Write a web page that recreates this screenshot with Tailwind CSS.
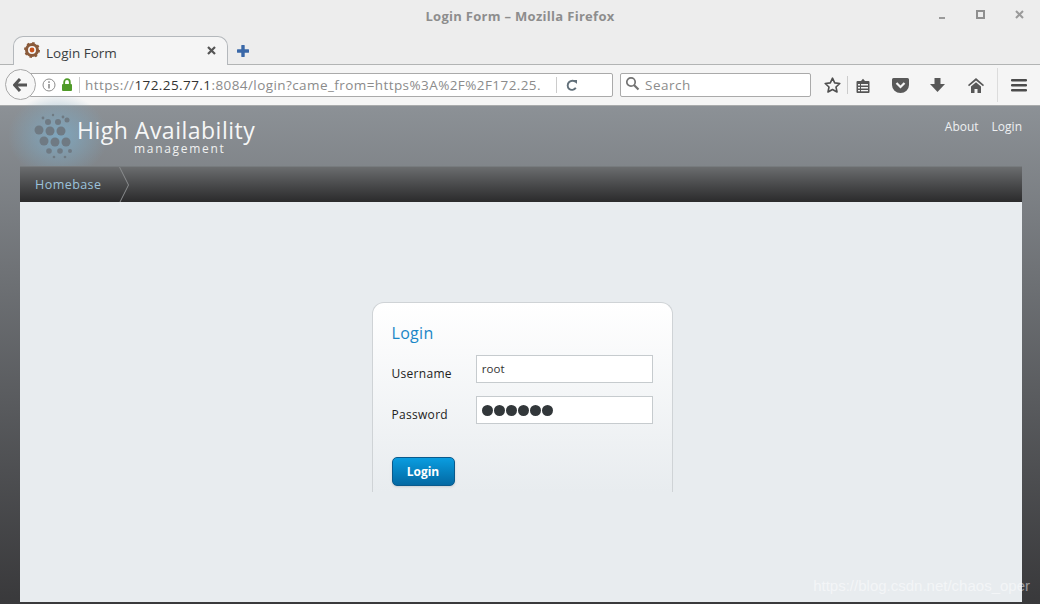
<!DOCTYPE html>
<html lang="en">
<head>
  <meta charset="UTF-8" />
  <title>Login Form - Mozilla Firefox</title>
  <script src="https://cdn.jsdelivr.net/npm/@tailwindcss/browser@4"></script>
</head>
<body class="w-[1040px] h-[604px] overflow-hidden bg-[#3b3b3d] font-['Open_Sans',sans-serif]">
  <!-- title bar + tab strip -->
  <div class="relative h-[65px] bg-[#ededed] border-b border-[#b2b4b4]">
    <div class="pt-[8px] text-center text-[13px] leading-[16px] font-bold text-[#8d8d8d] tracking-[0.3px]">Login Form – Mozilla Firefox</div>
    <div class="absolute right-0 top-[10px] flex items-center">
      <svg class="w-[8px] h-[8px] mr-[30px]" viewBox="0 0 8 8"><rect x="1" y="6" width="6" height="2" fill="#9a9a9a"/></svg>
      <svg class="w-[9px] h-[9px] mr-[30px]" viewBox="0 0 9 9"><rect x="1" y="1" width="7" height="7" fill="none" stroke="#8f8f8f" stroke-width="2"/></svg>
      <svg class="w-[9px] h-[9px] mr-[16px]" viewBox="0 0 9 9"><path d="M1 1l7 7M8 1l-7 7" stroke="#9a9a9a" stroke-width="2"/></svg>
    </div>
    <div class="absolute left-[13px] top-[36px] h-[29px] w-[215px] bg-[#f5f5f5] border border-b-0 border-[#b4b8bc] rounded-t-[10px] flex items-center pl-[10px] pr-[11px]">
      <svg class="w-[16px] h-[16px] mt-[-2px]" viewBox="0 0 16 16"><circle cx="8" cy="8" r="5.5" fill="none" stroke="#8a5a3a" stroke-width="3"/><circle cx="8" cy="8" r="7" fill="none" stroke="#8a5a3a" stroke-width="2" stroke-dasharray="2.4 3.1"/><circle cx="8" cy="8" r="2.4" fill="#c8521c"/></svg>
      <span class="ml-[6px] text-[13.5px] leading-[16px] text-[#3b3f42] mt-[3px]">Login Form</span>
      <svg class="ml-auto w-[9px] h-[9px] mt-[-1px]" viewBox="0 0 9 9"><path d="M1 1l7 7M8 1l-7 7" stroke="#555" stroke-width="2.2"/></svg>
    </div>
    <svg class="absolute left-[237px] top-[45px] w-[12px] h-[12px]" viewBox="0 0 12 12"><path d="M6 1v10M1 6h10" stroke="#3a68a8" stroke-width="3.4" stroke-linecap="round"/></svg>
  </div>
  <!-- nav toolbar -->
  <div class="relative h-[41px] bg-[#f5f5f5] border-b border-[#a9abac] flex items-center">
    <div class="absolute left-[5px] top-[4px] w-[31px] h-[31px] rounded-full bg-[#f7f7f7] border border-[#a8a8a8] flex items-center justify-center z-10">
      <svg class="w-[15px] h-[14px]" viewBox="0 0 15 14"><path d="M7 1L1.5 7 7 13M2 7h12" fill="none" stroke="#555" stroke-width="3"/></svg>
    </div>
    <div class="ml-[30px] w-[583px] h-[24px] bg-white border border-[#aaa] rounded-r-[2px] flex items-center mt-[-1px]">
      <svg class="ml-[11px] w-[14px] h-[14px]" viewBox="0 0 14 14"><circle cx="7" cy="7" r="6" fill="none" stroke="#8c8c8c"/><rect x="6.2" y="6" width="1.6" height="4.5" fill="#8c8c8c"/><rect x="6.2" y="3.3" width="1.6" height="1.6" fill="#8c8c8c"/></svg>
      <svg class="ml-[5px] w-[12px] h-[13px]" viewBox="0 0 12 13"><path d="M3.2 6V4a2.8 2.8 0 015.6 0v2" fill="none" stroke="#4f9a28" stroke-width="1.8"/><rect x="1" y="6" width="10" height="7" rx="1" fill="#4f9a28"/></svg>
      <div class="ml-[6px] w-px h-[16px] bg-[#ccc]"></div>
      <div class="ml-[5px] w-[469px] overflow-hidden whitespace-nowrap text-[13.5px] leading-[22px] tracking-[0.42px] text-[#8b8b8b]">https://<span class="text-[#333]">172.25.77.1</span>:8084/login?came_from=https%3A%2F%2F172.25.</div>
      <div class="ml-[2px] w-px h-[16px] bg-[#ccc]"></div>
      <svg class="ml-[9px] w-[12px] h-[12px]" viewBox="0 0 12 12"><path d="M10 3.2A4.6 4.6 0 103 9.8a4.6 4.6 0 006.8-1" fill="none" stroke="#62707a" stroke-width="1.9"/><path d="M7 1l4 0v4z" fill="#62707a"/></svg>
    </div>
    <div class="ml-[7px] w-[191px] h-[24px] bg-white border border-[#aaa] rounded-[2px] flex items-center mt-[-1px]">
      <svg class="ml-[4px] w-[15px] h-[15px] mt-[-2px]" viewBox="0 0 15 15"><circle cx="6" cy="6" r="4.2" fill="none" stroke="#737373" stroke-width="1.7"/><path d="M9 9l4.5 4.5" stroke="#737373" stroke-width="2.2"/></svg>
      <span class="ml-[5px] text-[13.5px] tracking-[0.5px] text-[#8c8c8c] leading-[22px]">Search</span>
    </div>
    <svg class="ml-[13px] w-[17px] h-[16px]" viewBox="0 0 17 16"><path d="M8.5 1.2l2.2 4.7 5.1.6-3.8 3.5 1 5-4.5-2.5L4 15l1-5L1.2 6.5l5.1-.6z" fill="none" stroke="#4f4f4f" stroke-width="1.6" stroke-linejoin="round"/></svg>
    <div class="ml-[6px] w-px h-[18px] bg-[#ccc]"></div>
    <svg class="ml-[8px] w-[14px] h-[15px]" viewBox="0 0 14 15"><path d="M1.5 3h3.5L7 .8 9 3h3.5a1 1 0 011 1v10a1 1 0 01-1 1h-11a1 1 0 01-1-1V4a1 1 0 011-1z" fill="#565656"/><path d="M2 6h2v1.5H2zM5 6h7v1.5H5zM2 9h2v1.5H2zM5 9h7v1.5H5zM2 12h2v1.2H2zM5 12h7v1.2H5z" fill="#f5f5f5"/></svg>
    <svg class="ml-[22px] w-[17px] h-[15px]" viewBox="0 0 17 15"><path d="M1.5 0h14A1.5 1.5 0 0117 1.5V7a8.5 8 0 01-17 0V1.5A1.5 1.5 0 011.5 0z" fill="#595959"/><path d="M4.5 5l4 4 4-4" fill="none" stroke="#f5f5f5" stroke-width="2.2"/></svg>
    <svg class="ml-[21px] w-[15px] h-[14px]" viewBox="0 0 15 14"><path d="M4.5 0h6v6H15l-7.5 8L0 6h4.500z" fill="#585858"/></svg>
    <svg class="ml-[23px] w-[16px] h-[15px]" viewBox="0 0 16 15"><path d="M8 0L0 7l1 1.200L8 2.400l7 5.800L16 7z" fill="#585858"/><path d="M3 8.500L8 4.300l5 4.200V15H9.500v-4h-3v4H3z" fill="#585858"/></svg>
    <div class="ml-[13px] w-px h-[34px] bg-[#dcdcdc]"></div>
    <svg class="ml-[13px] w-[16px] h-[13px]" viewBox="0 0 16 13"><path d="M1 0h14a1 1 0 010 2.500H1A1 1 0 011 0zM1 5h14a1 1 0 010 2.500H1A1 1 0 011 5zM1 10h14a1 1 0 010 2.500H1A1 1 0 011 10z" fill="#4c4c4c"/></svg>
  </div>
  <!-- page -->
  <div class="h-[498px] bg-gradient-to-b from-[#8c9196] to-[#39393b] relative px-[20px] pr-[18px]">
    <div class="h-[60px] flex justify-between">
      <div class="relative pl-[57px] pt-[11px]">
        <div class="absolute left-[-12px] top-[-12px] w-[100px] h-[84px] rounded-full bg-[radial-gradient(closest-side,#7fa6bd,transparent)]"></div>
        <svg class="absolute left-[13px] top-[7px] w-[44px] h-[48px]" viewBox="0 0 44 48">
          <g fill="#6f7a83"><circle cx="10" cy="5" r="1.400"/><circle cx="20" cy="2" r="1.200"/><circle cx="30" cy="4" r="1.400"/><circle cx="15" cy="9" r="3"/><circle cx="25" cy="9" r="3"/><circle cx="34" cy="7" r="2.500"/><circle cx="6" cy="17" r="4.500"/><circle cx="17" cy="18" r="4.500"/><circle cx="28" cy="18" r="4.500"/><circle cx="11" cy="28" r="4.500"/><circle cx="22" cy="29" r="4.500"/><circle cx="33" cy="29" r="4.500"/><circle cx="16" cy="38" r="2.800"/><circle cx="27" cy="38" r="2.800"/><circle cx="37" cy="38" r="2"/><circle cx="21" cy="44" r="1.300"/><circle cx="32" cy="44" r="1.300"/></g>
        </svg>
        <div class="relative text-[23px] leading-[26px] text-[#f6f7f7] tracking-[0.5px] font-['Open_Sans',sans-serif]">High Availability</div>
        <div class="relative ml-[57px] mt-[-1px] text-[12px] leading-[13px] tracking-[1.700px] text-[#f0f1f1]">management</div>
      </div>
      <div class="flex gap-[13px] pt-[13px] text-[12px] leading-[15px] text-[#eef0f1]"><span>About</span><span>Login</span></div>
    </div>
    <div class="relative h-[36px] bg-gradient-to-b from-[#6b6d6f] to-[#2b2b2c] border-t border-[#777b7e]">
      <span class="absolute left-[15px] top-[10px] text-[12.500px] leading-[16px] tracking-[0.450px] text-[#9cc3db]">Homebase</span>
      <svg class="absolute left-[99px] top-0 w-[11px] h-[36px]" viewBox="0 0 11 36"><path d="M0.500 0L9.500 18 0.500 36" fill="none" stroke="#8a8d8f"/></svg>
    </div>
    <div class="h-[400px] bg-[#e8ecef] flex justify-center pt-[100px] relative">
      <div class="w-[301px] h-[190px] ml-[2px] rounded-t-[12px] border border-b-0 border-[#cfd3d6] bg-gradient-to-b from-white to-[#e8ecef] px-[19px] pt-[20px]" style="border-image:none">
        <h1 class="text-[16px] leading-[20px] text-[#1a87c7] tracking-[0.300px]">Login</h1>
        <div class="mt-[12px] flex items-center h-[28px]">
          <label class="w-[87px] pt-[10px] text-[12px] tracking-[0.300px] text-[#222] leading-[16px]">Username</label>
          <div class="w-[182px] h-[28px] bg-white border border-[#c6cbce] pl-[5px] text-[11.500px] leading-[25px] text-[#333]">root</div>
        </div>
        <div class="mt-[13px] flex items-center h-[28px]">
          <label class="w-[87px] pt-[10px] text-[12px] tracking-[0.300px] text-[#222] leading-[16px]">Password</label>
          <div class="w-[182px] h-[28px] bg-white border border-[#c6cbce] pl-[5px] flex items-center gap-[1px]">
            <span class="w-[11px] h-[11px] rounded-full bg-[#32373a]"></span><span class="w-[11px] h-[11px] rounded-full bg-[#32373a]"></span><span class="w-[11px] h-[11px] rounded-full bg-[#32373a]"></span><span class="w-[11px] h-[11px] rounded-full bg-[#32373a]"></span><span class="w-[11px] h-[11px] rounded-full bg-[#32373a]"></span><span class="w-[11px] h-[11px] rounded-full bg-[#32373a]"></span>
          </div>
        </div>
        <button class="block mt-[33px] w-[63px] h-[29px] rounded-[5px] border border-[#0a5a8c] bg-gradient-to-b from-[#0a9de0] to-[#0469a3] text-white text-[12px] font-bold shadow-sm">Login</button>
      </div>
      <div class="absolute right-[-8px] bottom-[7px] text-[15px] leading-[18px] text-white/50 font-['Liberation_Sans',sans-serif]">https://blog.csdn.net/chaos_oper</div>
    </div>
  </div>
</body>
</html>
